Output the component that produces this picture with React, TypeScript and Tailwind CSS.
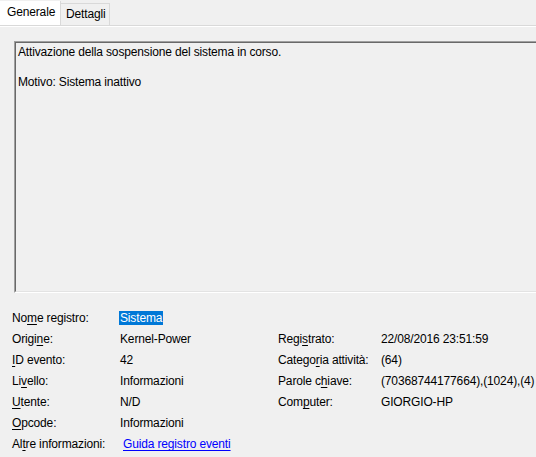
import React from 'react';

type Row = {
  label: React.ReactNode;
  value?: React.ReactNode;
  label2?: React.ReactNode;
  value2?: React.ReactNode;
};

// letter with access-key underline
function K({ children }: { children: string }) {
  return <span className="underline underline-offset-2">{children}</span>;
}

const rows: Row[] = [
  {
    label: <>No<K>m</K>e registro:</>,
    value: <span className="bg-[#0078d7] text-white px-px -ml-px">Sistema</span>,
  },
  {
    label: <>Origi<K>n</K>e:</>,
    value: 'Kernel-Power',
    label2: <>Regi<K>s</K>trato:</>,
    value2: '22/08/2016 23:51:59',
  },
  {
    label: <><K>I</K>D evento:</>,
    value: '42',
    label2: <>Catego<K>r</K>ia attività:</>,
    value2: '(64)',
  },
  {
    label: <>Li<K>v</K>ello:</>,
    value: 'Informazioni',
    label2: <>Parole c<K>h</K>iave:</>,
    value2: '(70368744177664),(1024),(4)',
  },
  {
    label: <><K>U</K>tente:</>,
    value: 'N/D',
    label2: <>Com<K>p</K>uter:</>,
    value2: 'GIORGIO-HP',
  },
  {
    label: <><K>O</K>pcode:</>,
    value: 'Informazioni',
  },
  {
    label: <>Al<K>t</K>re informazioni:</>,
    value: (
      <a href="#" className="ml-[3px] text-[#0000ff] underline underline-offset-2">
        Guida registro eventi
      </a>
    ),
  },
];

export default function App() {
  return (
    <div
      className="w-[536px] h-[457px] overflow-hidden bg-[#f0f0f0] text-[12px] leading-[15px] tracking-[-0.15px] text-black"
      style={{ fontFamily: '"Liberation Sans", Arial, sans-serif' }}
    >
      {/* tabs */}
      <div className="flex items-end h-[26px] border-b border-[#d9d9d9]">
        <div className="h-[24px] w-[61px] bg-white border-r border-[#d9d9d9] flex items-center pl-[7px] pb-[2px]">
          Generale
        </div>
        <div className="h-[22px] w-[49px] bg-[#f0f0f0] border-t border-r border-[#d9d9d9] flex items-center pl-[5px]">
          Dettagli
        </div>
      </div>

      <div className="border-t border-white pt-[14px] pl-[14px]">
        {/* message box */}
        <div className="w-[540px] h-[252px] border-t border-l border-[#a0a0a0] border-b border-b-white">
          <div className="h-full border-t border-l border-[#696969] border-b border-b-[#e3e3e3] pl-[2px] pt-[2px]">
            <p>Attivazione della sospensione del sistema in corso.</p>
            <p className="mt-[15px]">Motivo: Sistema inattivo</p>
          </div>
        </div>
      </div>

      {/* details grid */}
      <div className="mt-[15px] pl-[12px] grid grid-cols-[108px_158px_103px_1fr] auto-rows-[21px] items-center">
        {rows.map((r, i) => (
          <React.Fragment key={i}>
            <div className="whitespace-nowrap">{r.label}</div>
            <div className="whitespace-nowrap">{r.value}</div>
            <div className="whitespace-nowrap">{r.label2}</div>
            <div className="whitespace-nowrap">{r.value2}</div>
          </React.Fragment>
        ))}
      </div>
    </div>
  );
}
